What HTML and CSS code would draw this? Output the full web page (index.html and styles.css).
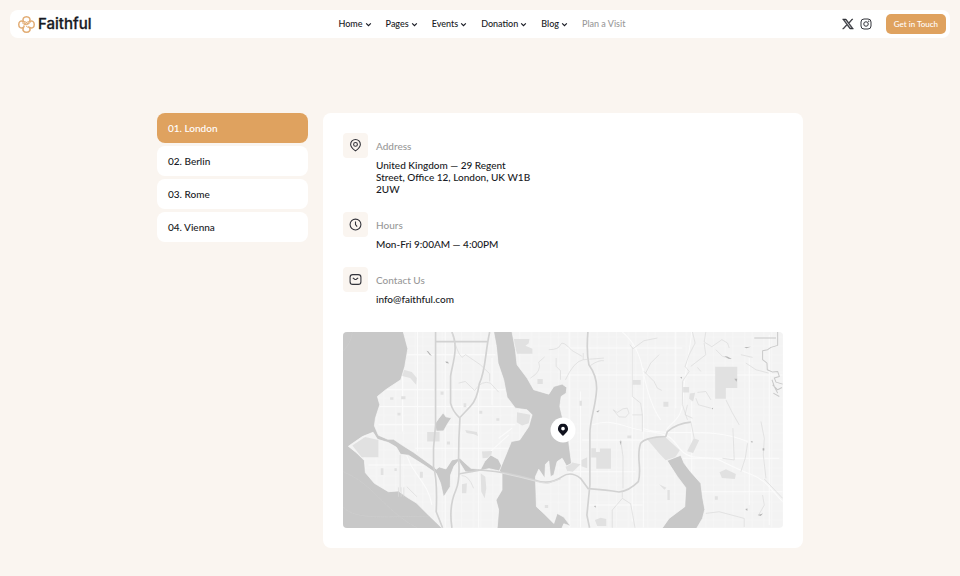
FILE: index.html
```html
<!DOCTYPE html>
<html lang="en">
<head>
<meta charset="utf-8">
<meta name="viewport" content="width=device-width, initial-scale=1">
<title>Faithful – Plan a Visit</title>
<link rel="stylesheet" href="styles.css">
</head>
<body>
<header class="topbar">
  <a class="brand" href="#">
    <svg class="brand-mark" viewBox="0 0 34 34" aria-hidden="true">
      <path class="knot" d="M11 11C8 5 12 1.500 17 1.500s9 3.500 6 9.500c6-3 9.500 1 9.500 6s-3.500 9-9.500 6c3 6-1 9.500-6 9.500s-9-3.500-6-9.500c-6 3-9.500-1-9.500-6s3.500-9 9.500-6Z"/>
      <path d="M11 11c4 0 7 2 9 5M23 11c-6 0-12 6-12 12M23 23c-3 0-5-1-7-3M8 14c3-1 5 2 8 4l9-5M11 16h10"/>
    </svg>
    <span>Faithful</span>
  </a>
  <nav class="menu" aria-label="Main">
    <a href="#">Home <svg class="caret" viewBox="0 0 6 6"><path d="m1 2 2 2 2-2"/></svg></a>
    <a href="#">Pages <svg class="caret" viewBox="0 0 6 6"><path d="m1 2 2 2 2-2"/></svg></a>
    <a href="#">Events <svg class="caret" viewBox="0 0 6 6"><path d="m1 2 2 2 2-2"/></svg></a>
    <a href="#">Donation <svg class="caret" viewBox="0 0 6 6"><path d="m1 2 2 2 2-2"/></svg></a>
    <a href="#">Blog <svg class="caret" viewBox="0 0 6 6"><path d="m1 2 2 2 2-2"/></svg></a>
    <a class="current" href="#">Plan a Visit</a>
  </nav>
  <div class="actions">
    <a class="social" href="#" aria-label="X"><svg viewBox="0 0 24 24"><path class="solid x-mark" d="M1 2h7.200l5.300 7.100L19.800 2H22l-7.500 8.500L23 22h-7.200l-5.700-7.700L3.200 22H1l8.100-9.200Zm3.500 1.800L16.700 20.200h2.800L7.300 3.800Z"/></svg></a>
    <a class="social" href="#" aria-label="Instagram"><svg viewBox="0 0 24 24"><rect x="2" y="2" width="20" height="20" rx="6"/><circle cx="12" cy="12" r="4.500"/><circle class="solid" cx="17.500" cy="6.500" r="1.300"/></svg></a>
    <a class="cta" href="#">Get in Touch</a>
  </div>
</header>

<main class="visit">
  <div class="cities">
    <button class="city active" type="button">01. London</button>
    <button class="city" type="button">02. Berlin</button>
    <button class="city" type="button">03. Rome</button>
    <button class="city" type="button">04. Vienna</button>
  </div>

  <section class="details">
    <div class="facts">
      <div class="fact">
        <span class="tile"><svg viewBox="0 0 24 24"><path d="M12 22C8 19 3 15 3 10a9 9 0 0 1 18 0c0 5-5 9-9 12Z"/><circle cx="12" cy="10" r="3.500"/></svg></span>
        <div><h2>Address</h2><p>United Kingdom — 29 Regent Street, Office 12, London, UK W1B 2UW</p></div>
      </div>
      <div class="fact">
        <span class="tile"><svg viewBox="0 0 24 24"><circle cx="12" cy="12" r="10"/><path d="M12 6.500V12l3 4"/></svg></span>
        <div><h2>Hours</h2><p>Mon-Fri 9:00AM — 4:00PM</p></div>
      </div>
      <div class="fact">
        <span class="tile"><svg viewBox="0 0 24 24"><rect x="2" y="3" width="20" height="18" rx="5"/><path d="m7 9 3.500 2.500q1.500 1 3 0L17 9"/></svg></span>
        <div><h2>Contact Us</h2><p>info@faithful.com</p></div>
      </div>
    </div>

    <div class="map">
      <svg viewBox="24 22 1317 586" preserveAspectRatio="xMidYMid slice" role="img" aria-label="Map">
        <defs>
          <pattern id="streets" width="58" height="52" patternUnits="userSpaceOnUse"><path d="M8 0V52M31 0V52M0 12H58M0 38H58" fill="none" stroke="#f8f8f8" stroke-width="2"/></pattern>
        </defs>
        <rect class="land" x="24" y="22" width="1317" height="586"/>
        <rect class="grid" x="24" y="22" width="1317" height="586" fill="url(#streets)"/>

        <g class="avenues">
          <path d="M202 150V320M247 22V380M330 22V608M430 180V608M470 100V240M701 22V608M735 200V608M890 60V590M923 130V608M1020 22V250M1068 230V600M1240 100V540M1300 30V600"/>
          <path d="M150 195H520M130 245H540M215 90H480M130 300H540M240 370H520M100 420H290M675 151H1340M690 70H1040M740 345H920M700 440H900M760 540H920M1040 400H1330M1080 500H1340"/>
          <path d="M860 22C895 50 912 90 920 130S945 245 975 285M1068 22C1060 90 1045 150 1042 220S1005 290 992 315M770 300C840 278 860 310 940 320S1010 350 1040 380S1120 390 1150 405S1210 435 1250 450S1310 500 1340 530M920 310C1000 340 1120 300 1235 350"/>
          <path d="M490 340L530 310M465 380L520 330M210 370C220 440 280 470 290 540"/>
        </g>

        <g class="parks">
          <path d="M206 135 230 142 245 160 243 180 225 160 198 153ZM532 43H582L580 56 570 63 591 72V87H545ZM545 262 585 270 580 295 560 302 544 292ZM276 321H313V350H276ZM52 362 90 336 130 345V397H80ZM767 370H781V381H793V371H826V431H782V398H767ZM1138 126H1204V190H1170V222H1138ZM891 166H915V180H891ZM932 340 990 338 1032 376 1018 398 990 406 970 385ZM1151 442 1170 433 1200 447 1197 462 1158 459ZM983 231H998V246H983ZM1042 187H1060V203H1042ZM1062 206 1078 204 1072 230 1060 222ZM1074 340 1090 346 1072 384 1054 379ZM778 585 795 578 812 582V603H785ZM436 445 450 455 453 490 448 520 438 500ZM380 478 395 475 393 505H380ZM606 163H622V178H606ZM440 380 470 378 466 398 442 400ZM690 425 710 413 735 418 712 440 695 438ZM738 405 755 397V430L738 424Z"/>
          <path d="M165 217h10v8h-10zM198 214h13v9h-13zM187 264h9v8h-9zM316 200h9v10h-9zM385 235h8v12h-8zM432 258h9v9h-9zM483 280h9v8h-9zM335 350h9v9h-9zM137 430h8v20h-8zM254 440h9v18h-9zM178 430h7v8h-7zM628 540h10v9h-10zM732 228h7v15h-7zM875 332h12v8h-12zM995 495h7v30h-7zM1137 514h9v10h-9zM970 478l22 10-6 6zM390 315l35 6 3 12-12-5-22-4z"/>
        </g>

        <g class="water">
          <path d="M18 16H203L218 72 209 125 197 165 153 194 127 215 134 240 121 280 118 303 130 331 158 343 175 343 203 362 235 382 297 427 303 433 312 426 332 432 350 405 374 400 390 415 407 430 436 433 448 410 466 390 489 403 500 425 492 438 461 431 407 443 390 440 370 408 356 424 346 450 345 485 325 516 316 475 303 445 268 421 220 391 196 388 184 367 160 353 127 343 114 322 82 335 40 364 65 384 88 407 91 443 118 475 160 500 190 498 216 517 244 534 275 565 303 592 325 614H18Z"/>
          <path d="M474 16H529L540 75 545 120 575 160 595 195 640 208 655 185 680 178 694 188 692 205 677 215 673 245 680 275 698 320 700 355 708 415 693 423 680 400 665 410 655 450 645 455 640 408 630 418 628 460 610 433 600 455 603 545 625 565 655 595 665 565 685 576 705 603 685 596 677 614H485L490 555 482 525 500 495 500 445 492 438 500 418 528 350 553 345 580 305 590 270 575 255 540 250 515 217 505 165 488 115 483 65Z"/>
          <path d="M324 264 332 276 349 279 338 295 325 318 303 319 299 297 311 280ZM994 407 1035 391 1045 415 1064 440 1095 475 1100 515 1107 553 1100 580 1080 614H976L1000 580 1047 545 1050 488 1025 455Z"/>
        </g>

        <g class="ferry"><path d="M24 440C120 480 140 550 245 608M24 545C60 590 170 570 282 575M24 80C60 40 45 22 55 22"/></g>
        <g class="highway">
          <path d="M350 22C372 72 350 120 346 155V235Q352 260 374 280Q370 340 370 400Q375 465 362 495Q340 545 350 608M463 22C448 90 452 135 432 177Q425 225 405 245L374 278M301 22V300L295 370V425Q307 465 303 560L322 608M301 51H455"/>
          <path d="M370 447 436 435Q510 440 590 463Q640 483 680 455Q706 437 735 460L758 491Q815 495 850 501Q880 498 908 470C920 430 900 395 915 355Q930 336 990 335L995 320Q1025 295 1065 292M757 22Q752 80 760 120Q785 155 783 195C780 250 762 285 763 330V480L754 570 762 608"/>
        </g>
        <g class="minor">
          <path d="M350 22Q365 85 380 98L391 90 435 120 463 147V170M370 175 390 170 418 197Q440 165 465 175L490 202M195 390V500M215 485 245 515M190 487V515M198 487V515M206 487V515M415 490Q400 450 379 452M640 75Q670 75 675 60T710 78L740 95M585 160Q620 140 610 112L627 97M690 165Q715 110 743 105M662 100V125L675 138V165M743 85V105L805 100M765 122Q790 105 805 108"/>
          <path d="M883 60 892 72 925 48 965 40M890 68V215L915 235 920 270V320M930 145 945 115 970 90M925 140 955 170 965 190 978 197M833 255 845 263 862 252 875 250 880 265 870 277 850 276 833 255M890 270H920M855 345 862 395V490M830 608V555L860 520 885 536 898 608M860 500V518"/>
          <path d="M1070 22 1078 55 1060 90 1048 125 1060 140 1040 170V240L1055 285M1110 22 1105 52 1128 66 1158 45 1175 55 1180 70M1105 55 1110 90 1065 125M1085 128 1095 140M1140 75 1160 95 1185 102M1215 90 1250 98M1230 115 1260 135 1298 145M1085 203 1110 200 1125 225M1080 220 1088 240 1125 250M1055 240 1048 270 1070 280M1170 225 1190 265 1210 300M1065 290 1075 340M1191 310 1195 405 1160 400M1275 290 1285 340 1282 390 1290 460M1235 355 1228 400 1215 440M1110 565 1150 560 1225 580V606M1280 510 1285 540 1268 570M1340 520 1285 462"/>
          <path class="river" d="M1325 22V62L1305 68 1295 75 1280 78V105L1293 115 1294 135 1310 142 1325 140 1330 155 1315 160 1320 172 1340 178M1310 180 1325 195 1338 188M1312 205 1330 215M1308 165 1315 185 1325 205M1255 40H1320"/>
        </g>
        <path class="avenues bridge" d="M500 445Q550 455 590 466T640 474L676 461"/>
        <path class="spots" d="m274 78 5 2 11 14-7-4zM330 110l8 1 3 5-8-1zM1165 94l9 1 14 8-10-1zM1225 68l20-2-14 5zM782 259l10-3-5 7zM1033 158l6-2-1 6zM852 350l5-1-1 12zM1195 162l9 0-2 9zM1280 370h5v7h-5zM1228 552l7-2-1 8zM1265 570l16-5-7 8zM775 543l6-1-1 6zM1127 250l5-1-1 5zM1244 350l6-2-1 6z"/>
      </svg>
      <span class="pin"><svg viewBox="0 0 12 14"><path d="M6 0a5.500 5.500 0 0 0-5.500 5.500C.5 9 4 11 6 13.500 8 11 11.500 9 11.500 5.500A5.500 5.500 0 0 0 6 0Zm0 3.500a2 2 0 1 1 0 4 2 2 0 0 1 0-4Z"/></svg></span>
    </div>
  </section>
</main>
</body>
</html>
```
FILE: styles.css
```css
* { box-sizing: border-box; }
body {
  margin: 0;
  padding: 10px;
  min-height: 100vh;
  background: #faf5f0;
  color: #171923;
  font: 500 10px/12px Lato, "Open Sans", sans-serif;
}
a { color: inherit; text-decoration: none; }
svg { display: block; fill: none; stroke: currentColor; }

.topbar {
  display: grid;
  grid-template-columns: 1fr auto 1fr;
  align-items: center;
  padding: 4px 4px 4px 8px;
  border-radius: 8px;
  background: #fff;
}
.brand {
  display: flex;
  align-items: center;
  gap: 3px;
  font: 500 15px/20px Inter, sans-serif;
  -webkit-text-stroke: 0.3px;
}
.brand-mark { width: 17px; height: 17px; color: #e2ad75; stroke-width: 2; }
.knot { stroke-width: 3; }
.menu { display: flex; gap: 14px; font-size: 9px; }
.menu a { display: flex; align-items: center; gap: 2px; }
.menu .current { color: #999; }
.caret { width: 7px; height: 7px; }
.actions { display: flex; align-items: center; justify-content: flex-end; gap: 6px; }
.social svg { width: 12px; height: 12px; stroke-width: 2; color: #33343b; }
.solid { fill: currentColor; stroke: none; }
.x-mark { stroke: currentColor; stroke-width: 1; }
.cta {
  margin-left: 8px;
  padding: 4px 8px;
  border-radius: 5px;
  background: #dfa25f;
  color: #fff;
  font-size: 8px;
}

.visit {
  display: grid;
  grid-template-columns: 151px 1fr;
  gap: 15px;
  align-items: start;
  max-width: 646px;
  margin: 75px auto 0;
}
.cities { display: grid; gap: 3px; }
.city {
  padding: 9px 11px;
  border: 0;
  border-radius: 8px;
  background: #fff;
  color: inherit;
  font: inherit;
  text-align: left;
}
.city.active { background: #dfa25f; color: #fff; }

.details { padding: 20px; border-radius: 8px; background: #fff; }
.facts { display: grid; gap: 17px; }
.fact { display: grid; grid-template-columns: 25px 156px; gap: 8px; }
.tile {
  display: grid;
  place-items: center;
  height: 25px;
  border-radius: 4px;
  background: #faf5f0;
}
.tile svg { width: 13px; height: 13px; stroke-width: 2; color: #33343b; }
h2 { margin: 7px 0; color: #999; font: inherit; }
p { margin: 0; }

.map {
  position: relative;
  margin-top: 27px;
  border-radius: 4px;
  overflow: hidden;
}
.map > svg { width: 100%; }
.land { fill: #f3f3f3; stroke: none; }
.grid { stroke: none; }
.avenues { stroke: #fbfbfb; stroke-width: 3; }
.parks { fill: #e1e1e1; stroke: none; }
.water { fill: #c8c8c8; stroke: #f9f9f9; stroke-width: 2; stroke-linejoin: round; }
.ferry { stroke: #cecece; stroke-width: 2; }
.highway { stroke: #d2d2d2; stroke-width: 5; stroke-linejoin: round; }
.minor { stroke: #dadada; stroke-width: 2; stroke-linejoin: round; }
.river { stroke: #c8c8c8; stroke-width: 3; }
.bridge { stroke: #dedede; }
.spots { fill: #b5b5b5; stroke: none; }
.pin {
  position: absolute;
  top: 50%;
  left: 50%;
  display: grid;
  place-items: center;
  width: 25px;
  height: 25px;
  border-radius: 50%;
  background: #fff;
  transform: translate(-50%, -50%);
}
.pin svg { width: 11px; height: 13px; fill: #10121e; stroke: none; }
```
